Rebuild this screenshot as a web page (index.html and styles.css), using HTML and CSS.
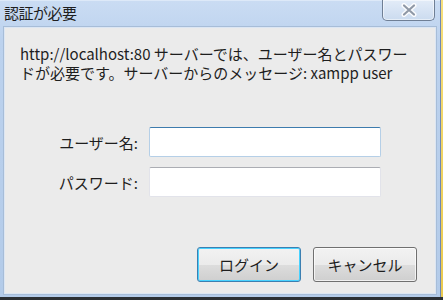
FILE: index.html
```html
<!DOCTYPE html>
<html lang="ja">
<head>
  <meta charset="UTF-8" />
  <title>認証が必要</title>
  <link rel="stylesheet" href="styles.css">
</head>
<body>
  <div class="screen">
    <div class="window">
      <div class="titlebar">
        <span class="title">認証が必要</span>
        <div class="close">
          <svg width="20" height="14" viewBox="0 0 20 14">
            <path d="M5 2.5 L15 11.5 M15 2.5 L5 11.5" stroke="#fbfcfe" stroke-width="5" stroke-linecap="round"/>
            <path d="M5 2.5 L15 11.5 M15 2.5 L5 11.5" stroke="#8f98a6" stroke-width="2.2" stroke-linecap="round"/>
          </svg>
        </div>
      </div>
      <div class="client">
        <p class="message">http://localhost:80 サーバーでは、ユーザー名とパスワー<br>ドが必要です。サーバーからのメッセージ: xampp user</p>

        <div class="fields">
          <label for="user">ユーザー名:</label>
          <input type="text" id="user" class="focused">
          <label for="pass">パスワード:</label>
          <input type="password" id="pass">
        </div>

        <div class="buttons">
          <button class="default">ログイン</button>
          <button>キャンセル</button>
        </div>
      </div>
    </div>
    <div class="behind"></div>
  </div>
  <div class="taskbar"></div>
</body>
</html>
```

FILE: styles.css
```css
body {
  margin: 0;
  width: 443px;
  height: 300px;
  overflow: hidden;
  font-family: "Noto Sans CJK JP", "Noto Sans", sans-serif;
  font-size: 15px;
  color: #1e1e1e;
  background: #2b2f33;
}

.screen {
  display: flex;
  height: 297px;
}

.behind {
  width: 2px;
  background: linear-gradient(#f6df7c, #e9c94e);
  border-left: 1px solid #6f86b4;
}

.window {
  flex: 1;
  display: flex;
  flex-direction: column;
  padding: 0 4px 3px 4px;
  background: linear-gradient(#cadcf3, #bcd2ee 40px, #b3cbe9);
  border-top: 1px solid #dde9f8;
}

.titlebar {
  height: 26px;
  display: flex;
  justify-content: space-between;
  align-items: flex-start;
}

.title {
  line-height: 23px;
  letter-spacing: -0.5px;
}

.close {
  width: 51px;
  height: 20px;
  margin-top: -1px;
  margin-right: 1px;
  display: flex;
  align-items: center;
  justify-content: center;
  border: 1px solid #6f7f95;
  border-top: none;
  border-radius: 0 0 5px 5px;
  background: linear-gradient(#e3ecf8, #cbdbef);
  box-shadow: inset 0 0 0 1px rgba(255,255,255,0.5);
}

.client {
  flex: 1;
  display: flex;
  flex-direction: column;
  background: #ebebeb;
  border: 1px solid #dce6f3;
  outline: 1px solid #a7bdd8;
}

.message {
  margin: 0;
  padding: 16px 0 0 15px;
  line-height: 19px;
}

.fields {
  display: grid;
  grid-template-columns: 133px 232px;
  column-gap: 11px;
  row-gap: 10px;
  align-items: center;
  margin-top: 45px;
}

.fields label {
  text-align: right;
}

.fields input {
  height: 30px;
  box-sizing: border-box;
  margin: 0;
  border: 1px solid #e2e3ea;
  border-top-color: #abadb3;
  border-radius: 2px;
  background: #fff;
  font: inherit;
}

.fields input.focused {
  border-color: #b5cfe7;
  border-top-color: #3d7bad;
}

.buttons {
  margin-top: auto;
  display: flex;
  justify-content: flex-end;
  gap: 12px;
  padding: 0 18px 11px 0;
}

.buttons button {
  width: 104px;
  height: 35px;
  font: inherit;
  color: #1e1e1e;
  border: 1px solid #707070;
  border-radius: 3px;
  background: linear-gradient(#f2f2f2, #ebebeb 50%, #dddddd 51%, #cfcfcf);
  box-shadow: inset 0 0 0 1px rgba(255,255,255,0.7);
}

.buttons button.default {
  border-color: #3c7fb1;
  box-shadow: inset 0 0 0 1px #48d2ff;
}

.taskbar {
  height: 3px;
  background: #2b2f33;
}
```
